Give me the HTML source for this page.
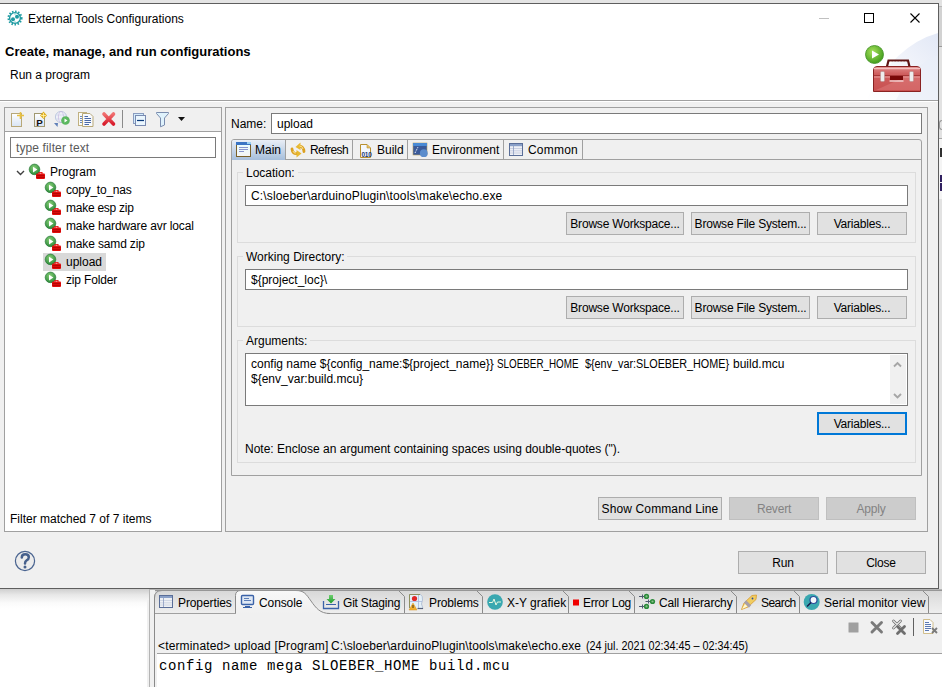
<!DOCTYPE html>
<html><head><meta charset="utf-8">
<style>
*{box-sizing:border-box;margin:0;padding:0}
html,body{width:942px;height:687px;overflow:hidden;background:#ffffff;font-family:"Liberation Sans",sans-serif;font-size:12px;color:#000}
.a{position:absolute}
svg{position:absolute;overflow:visible}
.t{position:absolute;white-space:nowrap;line-height:15px}
.btn{position:absolute;background:#e1e1e1;border:1px solid #adadad;text-align:center;line-height:21px;padding-top:1px;white-space:nowrap;letter-spacing:-0.2px}
.fld{position:absolute;background:#fff;border:1px solid #7a7a7a}
.grp{position:absolute;border:1px solid #dcdcdc}
.vl{position:absolute;width:1px;background:#a0a0a0}
.hl{position:absolute;height:1px;background:#a0a0a0}
</style></head><body>
<!-- ===== background eclipse (behind dialog) ===== -->
<div class="a" style="left:0;top:0;width:942px;height:3px;background:#e4e4e4"></div>
<div class="a" style="left:939px;top:0;width:3px;height:590px;background:#e2e2e2"></div>
<div class="a" style="left:939px;top:138px;width:3px;height:1px;background:#a8a8a8"></div>
<div class="a" style="left:939px;top:6px;width:3px;height:41px;background:#d2d2d2;border-top:1px solid #b8b8b8;border-bottom:1px solid #9a9a9a"></div>
<div class="a" style="left:939px;top:139px;width:3px;height:60px;background:#f4f4f4"></div>
<div class="a" style="left:939px;top:120px;width:3px;height:10px;border:1.5px solid #9a9a9a;border-right:none;border-radius:5px 0 0 5px"></div>
<div class="a" style="left:940px;top:148px;width:2px;height:9px;background:#303030"></div>
<div class="a" style="left:940px;top:175px;width:2px;height:7px;background:#302060"></div>
<div class="a" style="left:940px;top:183px;width:2px;height:8px;background:#302060"></div>
<!-- shadow below dialog -->

<!-- bottom eclipse view -->
<div class="a" style="left:149px;top:589px;width:1px;height:98px;background:#b4b4b4"></div>
<div class="a" style="left:150px;top:589px;width:792px;height:98px;background:#f0f0f0"></div>
<svg style="left:0;top:0" width="942" height="687">
  <defs>
    <linearGradient id="ut" x1="0" y1="0" x2="0" y2="1"><stop offset="0" stop-color="#d8d8d8"/><stop offset="0.5" stop-color="#e4e4e4"/><stop offset="1" stop-color="#eeeeee"/></linearGradient>
    <linearGradient id="st" x1="0" y1="0" x2="0" y2="1"><stop offset="0" stop-color="#f8f8f8"/><stop offset="1" stop-color="#f0f0f0"/></linearGradient>
    <linearGradient id="sh" x1="0" y1="0" x2="0" y2="1"><stop offset="0" stop-color="#cfcfcf"/><stop offset="0.06" stop-color="#e8e8e8"/><stop offset="0.14" stop-color="#fafafa"/><stop offset="0.2" stop-color="#ffffff"/></linearGradient>
  </defs>
  <path d="M154.5 613.5 V598 Q154.5 590.5 162 590.5 H942" fill="url(#ut)" stroke="#a0a0a0"/>
  <rect x="155" y="591" width="787" height="22" fill="url(#ut)"/>
  <path d="M154.5 598 Q154.5 590.5 162 590.5 H942" fill="none" stroke="#8a8a8a"/>
  <path d="M154.5 598 V687" stroke="#8a8a8a"/>
  <path d="M155 613.5 H236 M327 613.5 H942" stroke="#a0a0a0"/>
  <path d="M404.5 613 V596.5 L399 591 M482.5 613 V596.5 L477 591 M568.5 613 V596.5 L563 591 M634.5 613 V596.5 L629 591 M736.5 613 V596.5 L731 591 M799.5 613 V596.5 L794 591 M928.5 613 V596.5 L923 591" fill="none" stroke="#8a8a8a"/>
  <path d="M235.5 613.5 V595.5 Q235.5 590.5 241 590.5 H296 C304 590.5 306 594 311 601 C316 608 320 613.5 330 613.5 L236 613.5 Z" fill="url(#st)"/>
  <path d="M235.5 613.5 V595.5 Q235.5 590.5 241 590.5 H296 C304 590.5 306 594 311 601 C316 608 320 613.5 330 613.5" fill="none" stroke="#8a8a8a"/>
  <path d="M150 589.5 H942" stroke="#b4b4b4"/>
  <path d="M155 590.5 H942" stroke="#969696"/>
  <rect x="0" y="589" width="149" height="98" fill="url(#sh)"/>
  <path d="M157 653.5 H942" stroke="#a0a0a0"/>
  <rect x="157" y="654" width="785" height="33" fill="#fff"/>
  <rect x="147" y="600" width="2" height="87" fill="#f0f0f0"/>
</svg>

<!-- ===== dialog ===== -->
<div class="a" style="left:0;top:3px;width:939px;height:586px;background:#f0f0f0;border-top:1px solid #5e5e5e;border-right:1px solid #5e5e5e;border-bottom:1px solid #5e5e5e"></div>
<div class="a" style="left:0;top:4px;width:938px;height:96px;background:#fff"></div>
<div class="hl" style="left:0;top:100px;width:938px"></div>
<div class="a" style="left:0;top:101px;width:938px;height:1px;background:#fff"></div>

<!-- title bar -->
<svg style="left:0;top:0" width="30" height="30" viewBox="0 0 30 30">
  <circle cx="15" cy="18" r="5.4" fill="none" stroke="#1f9ba2" stroke-width="1.4"/>
  <circle cx="15" cy="18" r="6.6" fill="none" stroke="#1f9ba2" stroke-width="1.9" stroke-dasharray="1.5 1.6"/>
  <circle cx="13" cy="19.3" r="2" fill="#1f9ba2"/>
  <circle cx="17" cy="16.7" r="2" fill="#1f9ba2"/>
  <path d="M15 13 V15 M15 21 V23" stroke="#7cc4c8" stroke-width="0.8"/>
</svg>
<div class="t" style="left:28px;top:12px">External Tools Configurations</div>
<div class="a" style="left:819px;top:18px;width:10px;height:1px;background:#c0c0c0"></div>
<div class="a" style="left:864px;top:13px;width:10px;height:10px;border:1px solid #000"></div>
<svg style="left:0;top:0" width="942" height="30">
  <path d="M910.5 13.5 L919.5 22.5 M919.5 13.5 L910.5 22.5" stroke="#000" stroke-width="1.1"/>
</svg>

<!-- header -->
<div class="t" style="left:5px;top:44px;font-weight:bold;font-size:13px">Create, manage, and run configurations</div>
<div class="t" style="left:10px;top:68px">Run a program</div>
<svg style="left:0;top:0" width="942" height="100">
  <defs>
    <radialGradient id="gg" cx="0.4" cy="0.35" r="0.7"><stop offset="0" stop-color="#a6e05a"/><stop offset="1" stop-color="#3d9a1a"/></radialGradient>
    <linearGradient id="tb" x1="0" y1="0" x2="0" y2="1"><stop offset="0" stop-color="#e08a8a"/><stop offset="0.3" stop-color="#cf5e5e"/><stop offset="1" stop-color="#c85050"/></linearGradient>
    <linearGradient id="arc" x1="0" y1="1" x2="1" y2="0"><stop offset="0" stop-color="#ffffff"/><stop offset="0.5" stop-color="#f3f5fb"/><stop offset="1" stop-color="#e2e8f6"/></linearGradient>
  </defs>
  <path d="M866 100 Q895 45 938 33 L938 100 Z" fill="url(#arc)"/>
  <path d="M896 100 Q915 62 938 55 L938 100 Z" fill="#e9eef8" opacity="0.6"/>
  <circle cx="874.5" cy="54.5" r="9" fill="url(#gg)" stroke="#3f8f22" stroke-width="0.8"/>
  <path d="M872 50.5 L879 54.5 L872 58.5 Z" fill="#fff"/>
  <path d="M887 66.5 L888.5 60.5 L908 60.5 L909.5 66.5" fill="none" stroke="#5e1414" stroke-width="2.2"/>
  <path d="M890 61.5 H906" stroke="#d8b0b0" stroke-width="0.6" stroke-dasharray="1.5 1.5"/>
  <path d="M873.5 91.5 V70 Q873.5 66.5 877 66.5 H917 Q920.5 66.5 920.5 70 V91.5 Z" fill="url(#tb)" stroke="#8a2222"/>
  <path d="M874 68.5 H920" stroke="#f4c0c0" stroke-width="1.5"/>
  <path d="M874 75.5 H920" stroke="#a83838" stroke-width="1"/>
  <path d="M874 77 H920" stroke="#e8a0a0" stroke-width="1"/>
  <path d="M876 90 L905 77 L920 77 L920 90 Z" fill="#e89090" opacity="0.35"/>
  <rect x="880.5" y="71.5" width="4" height="10" rx="1.2" fill="#eeeeee" stroke="#b89090" stroke-width="0.6"/>
  <rect x="909.5" y="71.5" width="4" height="10" rx="1.2" fill="#eeeeee" stroke="#b89090" stroke-width="0.6"/>
  <rect x="890" y="76" width="13" height="4" fill="#7a0808"/>
  <path d="M889.5 81 H903.5" stroke="#fff" stroke-width="1"/>
</svg>

<!-- ===== left panel ===== -->
<div class="a" style="left:4px;top:107px;width:218px;height:425px;background:#fff;border:1px solid #a0a0a0"></div>
<div class="a" style="left:5px;top:108px;width:216px;height:24px;background:#f0f0f0;border-bottom:1px solid #a0a0a0"></div>
<svg style="left:0;top:0" width="230" height="135">
  <defs>
    <linearGradient id="pg" x1="0" y1="0" x2="0" y2="1"><stop offset="0" stop-color="#ffffff"/><stop offset="1" stop-color="#d8e4f4"/></linearGradient>
    <linearGradient id="rx" x1="0" y1="0" x2="0" y2="1"><stop offset="0" stop-color="#f07070"/><stop offset="1" stop-color="#d81c2c"/></linearGradient>
  </defs>
  <!-- new -->
  <rect x="11.5" y="113.5" width="10" height="13" fill="url(#pg)" stroke="#b8a878"/>
  <path d="M20.5 112 V119 M17 115.5 H24" stroke="#e8c040" stroke-width="1.6"/>
  <!-- P -->
  <rect x="34.5" y="113.5" width="10" height="13" fill="url(#pg)" stroke="#a09870"/>
  <text x="36.3" y="125.6" font-family="Liberation Sans" font-weight="bold" font-size="9.8" fill="#111">P</text>
  <path d="M43.5 111.5 L47 115.5 L43.5 119 L40 115.5 Z" fill="#e0b020"/>
  <path d="M43.5 113 V118 M41 115.5 H46" stroke="#fff3b0" stroke-width="0.8"/>
  <!-- launch -->
  <circle cx="61" cy="117" r="5.6" fill="#eef0f8" stroke="#b8c4dc" stroke-width="0.9"/>
  <ellipse cx="61" cy="117" rx="2.6" ry="5.5" fill="none" stroke="#c8b8e0" stroke-width="0.7"/>
  <path d="M55.5 115 H66.5 M55.5 119 H66.5" stroke="#c0cce4" stroke-width="0.7" stroke-dasharray="1 0.6"/>
  <path d="M54 123 L58 123 L57.5 127 Z" fill="#6080b8"/>
  <circle cx="65.5" cy="120.5" r="4.3" fill="#5cb860"/>
  <path d="M64.5 118.5 L67.5 120.5 L64.5 122.5 Z" fill="#fff"/>
  <!-- duplicate -->
  <rect x="78.5" y="112.5" width="8" height="13" fill="#fbfbf4" stroke="#c0b080"/>
  <path d="M82.5 113.5 H90 L93 116.5 V126.5 H82.5 Z" fill="#f8fafe" stroke="#b8a878"/>
  <path d="M84.5 116.5 H88 M84.5 118.5 H91 M84.5 120.5 H91 M84.5 122.5 H91 M84.5 124.5 H89" stroke="#4a6aa8" stroke-width="1"/>
  <path d="M80 116.5 H82 M80 118.5 H82 M80 120.5 H82 M80 122.5 H82" stroke="#6a88c0" stroke-width="1"/>
  <!-- red x -->
  <path d="M104 114 L113.5 124 M113.5 114 L104 124" stroke="url(#rx)" stroke-width="3.6" stroke-linecap="round"/>
  <path d="M122.5 110 V128" stroke="#8a8a8a" stroke-width="1"/>
  <!-- collapse -->
  <rect x="133.5" y="113.5" width="10" height="10" fill="#d4ecfc" stroke="#8a9cc0"/>
  <rect x="135.5" y="115.5" width="10" height="10" fill="#eaf6fe" stroke="#7a8ab0"/>
  <path d="M137 120.5 H144" stroke="#0a3a7a" stroke-width="1.2"/>
  <!-- filter -->
  <path d="M156.5 112.5 H168.5 V113.5 L164.5 118 V125 L160.5 126.8 V118 L156.5 113.5 Z" fill="#dff2fc" stroke="#7a8cae" stroke-width="1"/>
  <path d="M178 117 H185 L181.5 121 Z" fill="#111"/>
</svg>
<div class="fld" style="left:10px;top:137px;width:206px;height:21px;"></div>
<div class="t" style="left:16px;top:141px;color:#5a5a5a;letter-spacing:0.12px">type filter text</div>

<!-- tree -->
<svg style="left:0;top:0" width="230" height="300">
  <defs>
    <radialGradient id="tg" cx="0.45" cy="0.35" r="0.65"><stop offset="0" stop-color="#8ad078"/><stop offset="1" stop-color="#2a8a3a"/></radialGradient>
    <g id="ti">
      <circle cx="5.5" cy="5.4" r="5.3" fill="url(#tg)" stroke="#2a7a3a" stroke-width="0.7"/>
      <path d="M4 2.7 L8.4 5.5 L4 8.5 Z" fill="#fff"/>
      <rect x="7" y="9.6" width="9" height="5.4" rx="1" fill="#e40c0c"/>
      <rect x="9.5" y="8" width="4" height="2" fill="#e40c0c"/>
      <rect x="10.5" y="8.8" width="2" height="0.9" fill="#ffc8c8"/>
      <path d="M7.5 11.6 H15.5 M7.5 13.4 H15.5" stroke="#a00000" stroke-width="0.7"/>
    </g>
  </defs>
  <path d="M17 171 L20.5 174.5 L24 171" fill="none" stroke="#404040" stroke-width="1.4"/>
  <use href="#ti" x="29" y="164"/>
  <rect x="43" y="253" width="63" height="18" fill="#d9d9d9"/>
  <use href="#ti" x="45" y="182"/>
  <use href="#ti" x="45" y="200"/>
  <use href="#ti" x="45" y="218"/>
  <use href="#ti" x="45" y="236"/>
  <use href="#ti" x="45" y="254"/>
  <use href="#ti" x="45" y="272"/>
</svg>
<div class="t" style="left:50px;top:165px">Program</div>
<div class="t" style="left:66px;top:183px;letter-spacing:-0.23px">copy_to_nas</div>
<div class="t" style="left:66px;top:201px;letter-spacing:-0.25px">make esp zip</div>
<div class="t" style="left:66px;top:219px;letter-spacing:-0.13px">make hardware avr local</div>
<div class="t" style="left:66px;top:237px;letter-spacing:-0.15px">make samd zip</div>
<div class="t" style="left:66px;top:255px">upload</div>
<div class="t" style="left:66px;top:273px;letter-spacing:-0.15px">zip Folder</div>

<div class="t" style="left:10px;top:512px">Filter matched 7 of 7 items</div>

<!-- ===== right panel ===== -->
<div class="a" style="left:225px;top:107px;width:703px;height:425px;border:1px solid #a0a0a0"></div>
<div class="t" style="left:231px;top:117px">Name:</div>
<div class="fld" style="left:271px;top:113px;width:651px;height:21px"></div>
<div class="t" style="left:277px;top:117px">upload</div>

<!-- tab folder -->
<div class="a" style="left:231px;top:139px;width:691px;height:337px;border:1px solid #a0a0a0;border-radius:3px 3px 0 0"></div>
<div class="hl" style="left:232px;top:159px;width:689px"></div>
<div class="a" style="left:232px;top:140px;width:53px;height:20px;background:linear-gradient(#e9eef6,#a6bedb);border-radius:2px 0 0 0"></div>
<div class="vl" style="left:285px;top:140px;height:19px"></div>
<div class="vl" style="left:352px;top:140px;height:19px"></div>
<div class="vl" style="left:407px;top:140px;height:19px"></div>
<div class="vl" style="left:503px;top:140px;height:19px"></div>
<div class="vl" style="left:582px;top:140px;height:19px"></div>
<svg style="left:0;top:0" width="600" height="170">
  <defs>
    <linearGradient id="mg" x1="0" y1="0" x2="0" y2="1"><stop offset="0" stop-color="#eafcff"/><stop offset="1" stop-color="#f4f4f4"/></linearGradient>
    <linearGradient id="yg" x1="0" y1="0" x2="1" y2="1"><stop offset="0" stop-color="#fff0a0"/><stop offset="1" stop-color="#d89a10"/></linearGradient>
  </defs>
  <!-- main -->
  <rect x="236.5" y="144.5" width="14" height="12" fill="url(#mg)" stroke="#7a6028"/>
  <rect x="236" y="142" width="15" height="3" fill="#3a74c4"/>
  <rect x="247" y="142" width="4" height="2" fill="#9ad0f4"/>
  <path d="M239 147.5 H248 M239 149.5 H248 M239 151.5 H244" stroke="#7a88c8" stroke-width="0.9"/>
  <!-- refresh -->
  <path d="M299 146.5 Q303.5 146 304 151.5" fill="none" stroke="#dca020" stroke-width="2.8" stroke-linecap="round"/>
  <path d="M295.5 147 L300.5 142.5 L300.5 150 Z" fill="#e8b830"/>
  <path d="M297 153.5 Q292.5 154 292 149" fill="none" stroke="#dca020" stroke-width="2.8" stroke-linecap="round"/>
  <path d="M301.5 153.5 L296.5 157.5 L296.5 150 Z" fill="#e8b830"/>
  <path d="M299.5 146 Q302.5 146 303 149" fill="none" stroke="#fff4b0" stroke-width="0.8"/>
  <path d="M296 153 Q293.5 153.5 293 151" fill="none" stroke="#fff4b0" stroke-width="0.8"/>
  <!-- build -->
  <path d="M360.5 144.5 H367 L370.5 148 V157.5 H360.5 Z" fill="#f4f8fe" stroke="#b89030"/>
  <path d="M367 144.5 V148 H370.5" fill="#e8c060" stroke="#b89030" stroke-width="0.6"/>
  <text x="361.5" y="156.5" font-family="Liberation Sans" font-weight="bold" font-size="6.5" fill="#1a3a78" letter-spacing="-0.3">010</text>
  <!-- env -->
  <rect x="413" y="143" width="14" height="12" fill="#3a5a9a" stroke="#b8a060" stroke-width="0.6"/>
  <rect x="413" y="143" width="14" height="3" fill="#4a8ad4"/>
  <path d="M415 153 L418 147" stroke="#fff" stroke-width="1" stroke-dasharray="1 0.8"/>
  <circle cx="423.8" cy="153.2" r="3.9" fill="#5a8ccc"/>
  <!-- common -->
  <rect x="509.5" y="143.5" width="13" height="12" fill="#eef0f6" stroke="#5a6e98"/>
  <rect x="510" y="144" width="12" height="2.2" fill="#8aa0c8"/>
  <path d="M510 148.5 H522 M510 150.8 H522 M510 153 H522" stroke="#c0c8dc" stroke-width="0.8"/>
  <path d="M513.5 146 V155" stroke="#8a9ac0" stroke-width="0.8"/>
</svg>
<div class="t" style="left:255px;top:143px">Main</div>
<div class="t" style="left:310px;top:143px;letter-spacing:-0.55px">Refresh</div>
<div class="t" style="left:377px;top:143px">Build</div>
<div class="t" style="left:432px;top:143px">Environment</div>
<div class="t" style="left:528px;top:143px;letter-spacing:0.2px">Common</div>

<!-- Location group -->
<div class="grp" style="left:237px;top:172px;width:679px;height:71px"></div>
<div class="t" style="left:243px;top:166px;background:#f0f0f0;padding:0 3px">Location:</div>
<div class="fld" style="left:245px;top:185px;width:663px;height:21px"></div>
<div class="t" style="left:251px;top:189px;letter-spacing:0.15px">C:\sloeber\arduinoPlugin\tools\make\echo.exe</div>
<div class="btn" style="left:566px;top:212px;width:118px;height:23px">Browse Workspace...</div>
<div class="btn" style="left:691px;top:212px;width:119px;height:23px">Browse File System...</div>
<div class="btn" style="left:817px;top:212px;width:90px;height:23px">Variables...</div>

<!-- WD group -->
<div class="grp" style="left:237px;top:256px;width:679px;height:71px"></div>
<div class="t" style="left:243px;top:250px;background:#f0f0f0;padding:0 3px">Working Directory:</div>
<div class="fld" style="left:245px;top:269px;width:663px;height:21px"></div>
<div class="t" style="left:251px;top:273px">${project_loc}\</div>
<div class="btn" style="left:566px;top:296px;width:118px;height:23px">Browse Workspace...</div>
<div class="btn" style="left:691px;top:296px;width:119px;height:23px">Browse File System...</div>
<div class="btn" style="left:817px;top:296px;width:90px;height:23px">Variables...</div>

<!-- Args group -->
<div class="grp" style="left:237px;top:340px;width:679px;height:123px"></div>
<div class="t" style="left:243px;top:334px;background:#f0f0f0;padding:0 3px">Arguments:</div>
<div class="fld" style="left:245px;top:353px;width:663px;height:53px"></div>
<div class="a" style="left:890px;top:355px;width:16px;height:49px;background:#f0f0f0"></div>
<svg style="left:0;top:0" width="942" height="420">
  <path d="M894 366.5 L897.5 363 L901 366.5" fill="none" stroke="#a6a6a6" stroke-width="1.9"/>
  <path d="M894 394 L897.5 397.5 L901 394" fill="none" stroke="#a6a6a6" stroke-width="1.9"/>
</svg>
<div class="t" style="left:251px;top:357px">config name ${config_name:${project_name}}</div>
<div class="t" style="left:497px;top:357px;transform:scaleX(0.82);transform-origin:0 0">SLOEBER_HOME</div>
<div class="t" style="left:585px;top:357px;transform:scaleX(0.9);transform-origin:0 0">${env_var:SLOEBER_HOME}</div>
<div class="t" style="left:733px;top:357px">build.mcu</div>
<div class="t" style="left:251px;top:372px">${env_var:build.mcu}</div>
<div class="btn" style="left:817px;top:412px;width:90px;height:23px;border:2px solid #0078d7;line-height:19px">Variables...</div>
<div class="t" style="left:245px;top:442px">Note: Enclose an argument containing spaces using double-quotes (").</div>

<div class="btn" style="left:598px;top:497px;width:124px;height:23px;letter-spacing:0.12px">Show Command Line</div>
<div class="btn" style="left:729px;top:497px;width:90px;height:23px;background:#cccccc;border-color:#bfbfbf;color:#838383">Revert</div>
<div class="btn" style="left:826px;top:497px;width:90px;height:23px;background:#cccccc;border-color:#bfbfbf;color:#838383">Apply</div>

<!-- help -->
<svg style="left:0;top:0" width="50" height="590">
  <circle cx="25" cy="561" r="9.6" fill="#ececec" stroke="#4a6490" stroke-width="1.2"/>
  <path d="M21.8 557.5 Q21.8 554.3 25.3 554.3 Q28.8 554.3 28.8 557.2 Q28.8 559.3 26.6 560.4 Q25 561.2 25 563.6" fill="none" stroke="#46608c" stroke-width="2.5" stroke-linecap="round"/>
  <circle cx="25" cy="566.9" r="1.5" fill="#46608c"/>
</svg>
<div class="btn" style="left:738px;top:551px;width:90px;height:23px">Run</div>
<div class="btn" style="left:836px;top:551px;width:90px;height:23px">Close</div>

<!-- ===== bottom eclipse tabs ===== -->
<svg style="left:0;top:0" width="942" height="687">
  <defs>
    <linearGradient id="gs" x1="0" y1="0" x2="0" y2="1"><stop offset="0" stop-color="#70d070"/><stop offset="1" stop-color="#1a9a2a"/></linearGradient>
  </defs>
  <!-- properties -->
  <rect x="159.5" y="595.5" width="13" height="12" fill="#eef0f4" stroke="#5a6e98"/>
  <rect x="160" y="596" width="12" height="2" fill="#8aa0c8"/>
  <path d="M160 600.5 H172 M160 602.8 H172 M160 605 H172" stroke="#c8d0e0" stroke-width="0.8"/>
  <path d="M163.5 598 V607" stroke="#8a9ac0" stroke-width="0.8"/>
  <!-- console -->
  <rect x="241.5" y="595.5" width="12" height="9" rx="1" fill="#dfe8f4" stroke="#3a62a8" stroke-width="1.4"/>
  <path d="M244 598.5 H249 M244 600.5 H251" stroke="#3a62a8" stroke-width="0.8"/>
  <path d="M245 606.5 H250 M243 607.5 H252" stroke="#3a62a8" stroke-width="1"/>
  <!-- git staging -->
  <path d="M323.5 601 V608.5 H338.5 V601" fill="none" stroke="#3a62a8" stroke-width="1.3"/>
  <path d="M326 604.5 H336" stroke="#3a62a8" stroke-width="1"/>
  <path d="M329 595 H333 V599 H335.5 L331 603.5 L326.5 599 H329 Z" fill="url(#gs)"/>
  <!-- problems -->
  <path d="M409.5 608 V594.5 H420.5 Q423 596 422.5 600 L421.5 604 L423 608.5 H418" fill="#e4f0f8" stroke="#a8b8d0" stroke-width="0.8"/>
  <path d="M409.5 608 V594.5 H420" fill="none" stroke="#8a8a50" stroke-width="0.9"/>
  <path d="M410 601.5 H422 M418.5 595 V608.5" stroke="#a8b8dc" stroke-width="0.8"/>
  <path d="M417.5 608.5 H423" stroke="#56607a" stroke-width="1.2"/>
  <circle cx="414.5" cy="598.5" r="2.6" fill="#e02828"/>
  <path d="M409 610 L413 603 L417 610 Z" fill="#f0b030" stroke="#d89020" stroke-width="0.5"/>
  <path d="M413 605 V608" stroke="#4a3010" stroke-width="1"/>
  <!-- xy grafiek -->
  <circle cx="495" cy="602" r="7.8" fill="#3aa8b0"/>
  <path d="M489 602.5 H492.5 L494 599 L496 605 L497.5 602 H501" fill="none" stroke="#e8f8e0" stroke-width="1"/>
  <!-- error log -->
  <rect x="573" y="599.5" width="6" height="6" fill="#f00000"/>
  <!-- call hierarchy -->
  <path d="M639 596.5 H644 M645.5 601.5 H650 M639 606.5 H644" stroke="#505a70" stroke-width="1.2"/>
  <path d="M642.5 594.5 V598.5 M648.5 599.5 V603.5 M642.5 604.5 V608.5" stroke="#505a70" stroke-width="1"/>
  <circle cx="646.5" cy="596.4" r="2.6" fill="#2a8a3a"/>
  <circle cx="652.5" cy="601.5" r="2.6" fill="#2a8a3a"/>
  <circle cx="646.5" cy="606.4" r="2.6" fill="#2a8a3a"/>
  <circle cx="646.5" cy="596.4" r="1.1" fill="#8ac08a"/>
  <circle cx="652.5" cy="601.5" r="1.1" fill="#8ac08a"/>
  <circle cx="646.5" cy="606.4" r="1.1" fill="#8ac08a"/>
  <!-- search -->
  <path d="M741.5 609.5 L744 603 L752 595.5 L756.5 595 L756 599.5 L748 607 Z" fill="#f0cc60" stroke="#d89a30" stroke-width="0.8"/>
  <path d="M745 601.5 L750 606.5" stroke="#a8a0a8" stroke-width="3.2"/>
  <path d="M742 609 L745 604 L747.5 606.5 Z" fill="#fff8d0"/>
  <circle cx="752.5" cy="598.5" r="0.9" fill="#2a4a9a"/>
  <!-- serial -->
  <circle cx="811.7" cy="602" r="8" fill="#3aa8b0"/>
  <circle cx="813.5" cy="600" r="3.5" fill="#f4f8fc" stroke="#2a4a9a" stroke-width="1.2"/>
  <path d="M811 602.5 L807 606.5" stroke="#1a1a4a" stroke-width="1.5"/>
  <!-- console toolbar -->
  <rect x="848.5" y="622.5" width="10" height="10" rx="1" fill="#a0a0a0" stroke="#c8c8c8" stroke-width="1"/>
  <path d="M872 622.5 L881.5 632 M881.5 622.5 L872 632" stroke="#7a7a7a" stroke-width="2.9" stroke-linecap="round"/>
  <path d="M893.5 621 L900.5 628 M900.5 621 L893.5 628" stroke="#6a6a6a" stroke-width="2.6" stroke-linecap="round"/>
  <path d="M893.5 621 L900.5 628 M900.5 621 L893.5 628" stroke="#e8e8e8" stroke-width="1.2" stroke-linecap="round"/>
  <path d="M897.5 626.5 L904.5 633.5 M904.5 626.5 L897.5 633.5" stroke="#6e6e6e" stroke-width="2.8" stroke-linecap="round"/>
  <path d="M913.5 618 V636" stroke="#606060" stroke-width="1"/>
  <path d="M923.5 619.5 H930 L933 622.5 V633.5 H923.5 Z" fill="#f8fafe" stroke="#c8b070" stroke-width="0.8"/>
  <path d="M925 622.5 H929 M925 624.5 H931 M925 626.5 H931 M925 628.5 H931 M925 630.5 H929" stroke="#4a6aa8" stroke-width="0.9"/>
  <path d="M932 628 L937 633 M937 628 L932 633" stroke="#7a7a7a" stroke-width="1.8"/>
</svg>

<div class="t" style="left:178px;top:596px;letter-spacing:-0.1px">Properties</div>
<div class="t" style="left:259px;top:596px;letter-spacing:-0.1px">Console</div>
<div class="t" style="left:343px;top:596px;letter-spacing:-0.2px">Git Staging</div>
<div class="t" style="left:429px;top:596px;letter-spacing:-0.12px">Problems</div>
<div class="t" style="left:507px;top:596px">X-Y grafiek</div>
<div class="t" style="left:583px;top:596px;letter-spacing:-0.22px">Error Log</div>
<div class="t" style="left:659px;top:596px;letter-spacing:-0.13px">Call Hierarchy</div>
<div class="t" style="left:761px;top:596px;letter-spacing:-0.55px">Search</div>
<div class="t" style="left:824px;top:596px">Serial monitor view</div>
<div class="t" style="left:158px;top:639px;letter-spacing:0.15px">&lt;terminated&gt; upload [Program]</div>
<div class="t" style="left:331px;top:639px;letter-spacing:0.12px">C:\sloeber\arduinoPlugin\tools\make\echo.exe</div>
<div class="t" style="left:586px;top:639px;transform:scaleX(0.9);transform-origin:0 0">(24 jul. 2021 02:34:45 – 02:34:45)</div>
<div class="t" style="left:159px;top:658px;font-family:'Liberation Mono',monospace;font-size:14px;letter-spacing:0.6px;line-height:17px">config name mega SLOEBER_HOME build.mcu</div>

</body></html>
